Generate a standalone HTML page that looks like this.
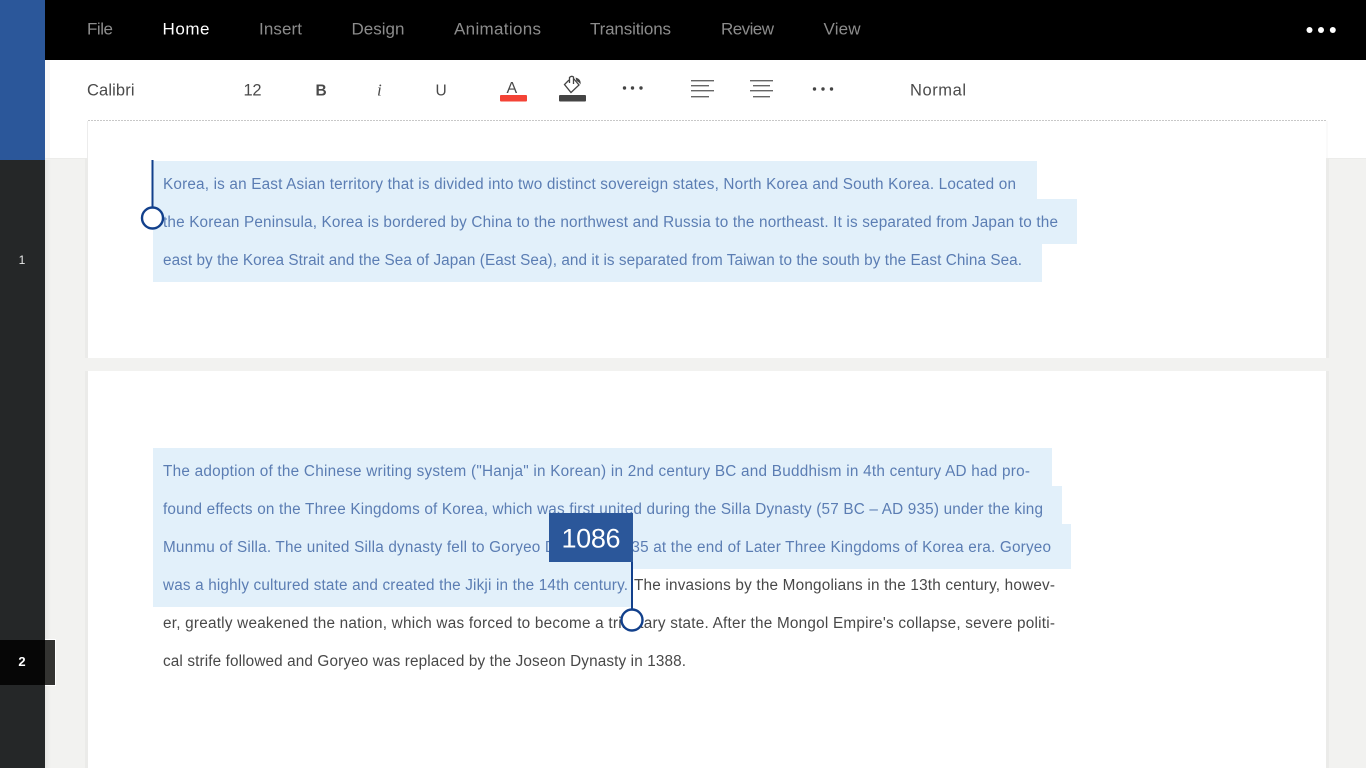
<!DOCTYPE html>
<html lang="en"><head><meta charset="utf-8"><title>Document editor</title>
<style>
html,body{margin:0;padding:0;width:1366px;height:768px;overflow:hidden;background:#f2f2f0}
svg{position:absolute;left:0;top:0;display:block}
text{font-family:"Liberation Sans",sans-serif}
.nav{font-size:17px;fill:#8c8c8c}
.tb{font-size:16.500px;fill:#4a4a4a}
.sel{font-size:15.300px;fill:#5b7db3}
.blk{font-size:15.300px;fill:#484848}
</style></head><body>
<svg width="1366" height="768" viewBox="0 0 1366 768" xmlns="http://www.w3.org/2000/svg">
<defs>
<linearGradient id="sh" x1="0" x2="1" y1="0" y2="0"><stop offset="0" stop-color="#e6e6e4"/><stop offset="1" stop-color="#f2f2f0"/></linearGradient>
</defs>
<rect width="1366" height="768" fill="#f2f2f0"/>
<!-- sidebar -->
<rect x="0" y="0" width="45" height="160" fill="#2b579a"/>
<rect x="0" y="160" width="45" height="608" fill="#252728"/>
<rect x="45" y="160" width="6" height="608" fill="url(#sh)"/>
<text x="22" y="264" font-size="12" fill="#e8e8e8" text-anchor="middle">1</text>
<rect x="45" y="639" width="11" height="47" fill="#fff"/>
<rect x="0" y="640" width="55" height="45" fill="#333331"/>
<rect x="0" y="640" width="45" height="45" fill="#060606"/>
<text x="22" y="666" font-size="13" font-weight="bold" fill="#fff" text-anchor="middle">2</text>
<!-- toolbar -->
<rect x="45" y="60" width="1321" height="98" fill="#fff"/>
<rect x="45" y="60" width="5" height="98" fill="#f9f9f9"/>
<rect x="45" y="158" width="1321" height="1" fill="#ececea"/>
<rect x="45" y="0" width="1321" height="60" fill="#000"/>
<text class="nav" x="87" y="34.500" textLength="26">File</text>
<text class="nav" x="162.500" y="34.500" textLength="47" style="fill:#fff">Home</text>
<text class="nav" x="259" y="34.500" textLength="43">Insert</text>
<text class="nav" x="351.500" y="34.500" textLength="53">Design</text>
<text class="nav" x="454" y="34.500" textLength="87">Animations</text>
<text class="nav" x="590" y="34.500" textLength="81">Transitions</text>
<text class="nav" x="721" y="34.500" textLength="53">Review</text>
<text class="nav" x="823.500" y="34.500" textLength="37">View</text>
<circle cx="1309.500" cy="30" r="3" fill="#fff"/><circle cx="1321" cy="30" r="3" fill="#fff"/><circle cx="1332.800" cy="30" r="3" fill="#fff"/>
<text class="tb" x="87" y="95.500" textLength="47.500">Calibri</text>
<text class="tb" x="243.500" y="95.500" textLength="18">12</text>
<text x="315.500" y="95.500" font-size="15.500" font-weight="bold" fill="#4a4a4a">B</text>
<text x="377" y="95.500" font-size="17" font-style="italic" style="font-family:'Liberation Serif',serif" fill="#4a4a4a">i</text>
<text x="435.500" y="95.500" font-size="15.500" fill="#4a4a4a">U</text>
<text x="506.500" y="93" font-size="16" fill="#4a4a4a">A</text>
<rect x="500" y="95" width="27" height="6.500" rx="1" fill="#f44336"/>
<g fill="none" stroke="#444" stroke-width="1.300">
<path d="M569 80 L564.500 84.500 L571 92.500 L579 85 L573.500 78.500"/>
<path d="M569.500 83 V77.500 Q571.500 75.500 573.500 77 V84"/>
</g>
<path d="M575.500 77.500 Q581.500 79 580.500 84.500 Q579 82 576.500 81 Z" fill="#444"/>
<rect x="559" y="95" width="27" height="6.500" rx="1" fill="#444"/>
<g fill="#444"><circle cx="624.500" cy="88" r="1.700"/><circle cx="632.500" cy="88" r="1.700"/><circle cx="641" cy="88" r="1.700"/>
<circle cx="814.500" cy="89" r="1.700"/><circle cx="823" cy="89" r="1.700"/><circle cx="831.500" cy="89" r="1.700"/></g>
<g fill="#666">
<rect x="691" y="80" width="23" height="1.400"/><rect x="691" y="85" width="18" height="1.400"/><rect x="691" y="90" width="23" height="1.400"/><rect x="691" y="96" width="18" height="1.400"/>
<rect x="750" y="80" width="23" height="1.400"/><rect x="753" y="85" width="17" height="1.400"/><rect x="750" y="90" width="23" height="1.400"/><rect x="753" y="96" width="17" height="1.400"/>
</g>
<text class="tb" x="910" y="95.500" textLength="56">Normal</text>
<!-- pages -->
<rect x="85" y="158" width="3" height="200" fill="#ebebe9"/>
<rect x="1326" y="158" width="3" height="200" fill="#ebebe9"/>
<rect x="85" y="371" width="3" height="397" fill="#ebebe9"/>
<rect x="1326" y="371" width="3" height="397" fill="#ebebe9"/>
<rect x="1326" y="121" width="2" height="37" fill="#fafafa"/>
<rect x="88" y="121" width="1238" height="237" fill="#fff"/>
<rect x="88" y="371" width="1238" height="397" fill="#fff"/>
<line x1="88" x2="1326" y1="120.500" y2="120.500" stroke="#c8c8c8" stroke-width="1" stroke-dasharray="2 1"/>
<line x1="87.500" x2="87.500" y1="121" y2="158" stroke="#ececec" stroke-width="1"/>
<!-- highlights -->
<g fill="#e2f0fa">
<rect x="153" y="161" width="884" height="38"/>
<rect x="153" y="199" width="924" height="45"/>
<rect x="153" y="244" width="889" height="38"/>
<rect x="153" y="448" width="899" height="38"/>
<rect x="153" y="486" width="909" height="38"/>
<rect x="153" y="524" width="918" height="45"/>
<rect x="153" y="569" width="479" height="38"/>
</g>
<!-- text -->
<text class="sel" x="163" y="189" textLength="853">Korea, is an East Asian territory that is divided into two distinct sovereign states, North Korea and South Korea. Located on</text>
<text class="sel" x="163" y="227" textLength="895">the Korean Peninsula, Korea is bordered by China to the northwest and Russia to the northeast. It is separated from Japan to the</text>
<text class="sel" x="163" y="265" textLength="859">east by the Korea Strait and the Sea of Japan (East Sea), and it is separated from Taiwan to the south by the East China Sea.</text>
<text class="sel" x="163" y="476" textLength="867">The adoption of the Chinese writing system ("Hanja" in Korean) in 2nd century BC and Buddhism in 4th century AD had pro-</text>
<text class="sel" x="163" y="514" textLength="880">found effects on the Three Kingdoms of Korea, which was first united during the Silla Dynasty (57 BC – AD 935) under the king</text>
<text class="sel" x="163" y="552" textLength="888">Munmu of Silla. The united Silla dynasty fell to Goryeo Dynasty in 935 at the end of Later Three Kingdoms of Korea era. Goryeo</text>
<text class="sel" x="163" y="590" textLength="465">was a highly cultured state and created the Jikji in the 14th century.</text>
<text class="blk" x="634" y="590" textLength="421">The invasions by the Mongolians in the 13th century, howev-</text>
<text class="blk" x="163" y="628" textLength="892">er, greatly weakened the nation, which was forced to become a tributary state. After the Mongol Empire's collapse, severe politi-</text>
<text class="blk" x="163" y="666" textLength="523">cal strife followed and Goryeo was replaced by the Joseon Dynasty in 1388.</text>
<!-- handles -->
<rect x="151.500" y="160" width="2" height="48" fill="#12408c"/>
<circle cx="152.500" cy="218" r="10.500" fill="#fff" stroke="#12408c" stroke-width="2.400"/>
<rect x="549" y="513" width="84" height="49" fill="#2b579a"/>
<text x="561.500" y="547.500" font-size="27" fill="#fff" textLength="59">1086</text>
<rect x="631" y="562" width="2" height="48" fill="#12408c"/>
<circle cx="632" cy="620" r="10.500" fill="#fff" stroke="#12408c" stroke-width="2.400"/>
</svg>
</body></html>
